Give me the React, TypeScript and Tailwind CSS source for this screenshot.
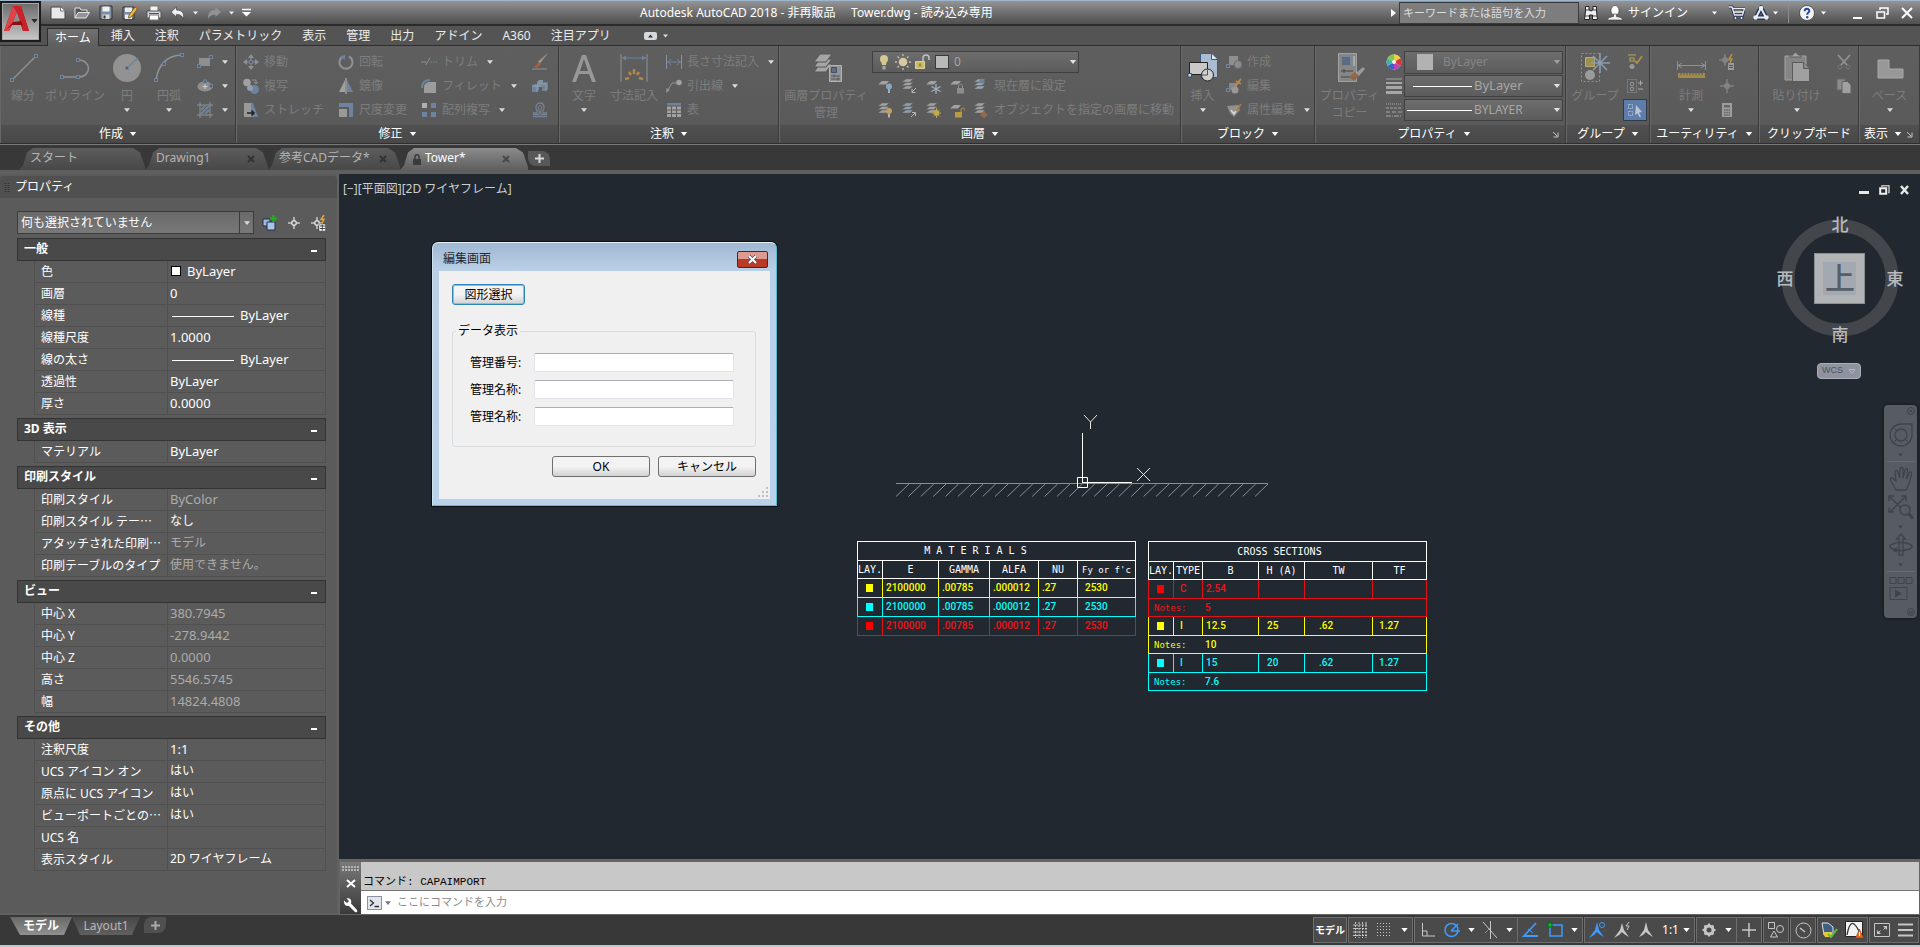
import type { ReactNode } from "react";

const BLUE = "#6d839f";
const GREY = "#8e9296";

/* ---------- small building blocks ---------- */

function Ico({ w = 16, h = 16, children }: { w?: number; h?: number; children: ReactNode }) {
  return (
    <svg width={w} height={h} viewBox={`0 0 ${w} ${h}`} fill="none" className="shrink-0" aria-hidden="true">
      {children}
    </svg>
  );
}

function Caret({ color = "#dcdcdc", w = 6 }: { color?: string; w?: number }) {
  return (
    <svg width={w} height={4} viewBox="0 0 8 5" className="shrink-0" aria-hidden="true">
      <path d="M0 0h8L4 5z" fill={color} />
    </svg>
  );
}

function BigButton({ icon, label, label2, caret, className }: { icon: ReactNode; label: string; label2?: string; caret?: boolean; className: string }) {
  return (
    <button className={`flex shrink-0 flex-col items-center whitespace-nowrap text-[#7d7d7d] ${className}`}>
      {icon}
      <span className="mt-1.5 leading-4">{label}</span>
      {label2 && <span className="leading-[18px]">{label2}</span>}
      {caret && <span className="mt-1 flex"><Caret /></span>}
    </button>
  );
}

function SmallButton({ icon, label, caret }: { icon: ReactNode; label?: string; caret?: boolean }) {
  return (
    <button className="flex h-6 items-center gap-[5px] whitespace-nowrap text-[#7d7d7d]" aria-label={label ? undefined : "ツール"}>
      {icon}
      {label && <span>{label}</span>}
      {caret && <span className="ml-1 flex"><Caret /></span>}
    </button>
  );
}

function Panel({ title, arrow = true, launcher, children }: { title: string; arrow?: boolean; launcher?: boolean; children: ReactNode }) {
  return (
    <section className="flex min-w-0 flex-col border-r border-[#3b3b3b]">
      <div className="flex flex-1 items-start border-l border-[#686868] bg-linear-to-b from-[#5f5f5f] to-[#5a5a5a] pt-1 pb-[3px]">{children}</div>
      <div className="flex h-[18px] items-center border-l border-[#686868] bg-linear-to-b from-[#505050] to-[#484848]">
        <button className="flex flex-1 items-center justify-center gap-1.5 whitespace-nowrap leading-4 text-white">
          {title}
          {arrow && <Caret w={8} color="#fff" />}
        </button>
        {launcher && (
          <button className="mr-1.5" aria-label="ダイアログ">
            <Ico w={7} h={7}><path d="M1 1l4 4M6 1.500v4.500H1.500" stroke="#c8c8c8" /></Ico>
          </button>
        )}
      </div>
    </section>
  );
}

/* little square grip used by most of the drawing icons */
function Grip({ x, y }: { x: number; y: number }) {
  return <rect x={x - 1.5} y={y - 1.5} width="3" height="3" fill="#5c5c5c" stroke={BLUE} />;
}

function Stack({ accent, children }: { accent?: string; children?: ReactNode }) {
  return (
    <Ico>
      {[2, 5.5, 9].map((y) => (
        <path key={y} d={`M5 ${y - 1}h7l-3 3H1z`} fill={accent ?? "#a0a2a4"} stroke="#626262" strokeWidth=".5" />
      ))}
      {children}
    </Ico>
  );
}

function Sheet({ children }: { children?: ReactNode }) {
  return (
    <Ico>
      <path d="M5 3h7l-3 3.500H1z" fill="#a0a2a4" />
      {children}
    </Ico>
  );
}

/* ---------- title bar ---------- */

const tools = [
  {
    name: "新規",
    icon: <Ico><path d="M1 2h9.500l4.500 4v8H1z" fill="#e8e8e8" stroke="#444" /><path d="M10.500 2v4H15" stroke="#777" fill="#fff" /></Ico>,
  },
  {
    name: "開く",
    icon: <Ico><path d="M1 13V3h5l1 2h6v3" fill="#555" stroke="#e4e4e4" /><path d="M1 13l3-5.500h11.500L12 13z" fill="#8f959d" stroke="#e4e4e4" /></Ico>,
  },
  {
    name: "保存",
    icon: <Ico><path d="M2 1h12v13H2z" fill="#7c8da3" stroke="#333" /><path d="M4.500 1.500h7v5h-7z" fill="#f1f1f1" /><path d="M4.500 9.500h7v4.500h-7z" fill="#d8d8d8" /><path d="M5.500 10.500h2v3h-2z" fill="#333" /></Ico>,
  },
  {
    name: "名前を付けて保存",
    icon: <Ico><path d="M1 2h11v12H1z" fill="#7c8da3" stroke="#333" /><path d="M3 2.500h7v4.500H3zM3 9.500h7v4.500H3z" fill="#ececec" /><path d="M7 10l6-8 2.500 2-6 8-3 1z" fill="#eab543" stroke="#5d4310" strokeWidth=".7" /><path d="M13 2l2.500 2 .5-1.500L14.500 1z" fill="#d55" /></Ico>,
  },
  {
    name: "印刷",
    icon: <Ico><path d="M4 1h8v6H4z" fill="#f4f4f4" stroke="#777" /><path d="M1 6h14v7H1z" fill="#d4d6d9" stroke="#555" /><path d="M3.500 10h9v5h-9z" fill="#fff" stroke="#777" /><path d="M3 8.500h10" stroke="#555" /></Ico>,
  },
  {
    name: "元に戻す",
    caret: true,
    icon: <Ico><path d="M1 7l5.500-5v3C12 5 14.500 8 13.500 14 12 10.500 10 9.500 6.500 9.500V12z" fill="#f0f0f0" stroke="#444" strokeWidth=".7" /></Ico>,
  },
  {
    name: "やり直し",
    caret: true,
    icon: <Ico><path d="M15 7L9.500 2v3C4 5 1.500 8 2.500 14 4 10.500 6 9.500 9.500 9.500V12z" fill="#929292" /></Ico>,
  },
];

function TitleBar() {
  return (
    <div className="flex h-[25px] items-center border-b-2 border-[#2b2b2b] bg-linear-to-b from-[#959595] via-[#6f6f6f] to-[#505050] pl-[50px]">
      <div className="flex flex-[44_1_0%] items-center gap-2">
        {tools.map((t) => (
          <button key={t.name} aria-label={t.name} className="flex items-center gap-[7px]">
            {t.icon}
            {t.caret && <Caret w={5} color="#f0f0f0" />}
          </button>
        ))}
        <button aria-label="カスタマイズ">
          <Ico w={9} h={9}><path d="M0 1.500h9" stroke="#fff" strokeWidth="1.500" /><path d="M0 4h9L4.500 8.500z" fill="#fff" /></Ico>
        </button>
      </div>
      <h1 className="flex-[56_1_0%] text-[12px] whitespace-pre text-white">
        {"Autodesk AutoCAD 2018 - 非再販品     Tower.dwg - 読み込み専用"}
      </h1>
      <div className="flex items-center">
        <Ico w={6} h={8}><path d="M0 0v8l5-4z" fill="#fff" /></Ico>
        <input
          aria-label="検索"
          placeholder="キーワードまたは語句を入力"
          className="ml-0.5 h-[22px] w-[180px] border border-[#3a3a3a] bg-[#7d7d7d] px-[3px] text-[11px] text-white placeholder:text-[#dedede]"
        />
        <button aria-label="検索を実行" className="ml-1">
          <Ico>
            <path d="M2.500 1.500h3.500v3.500h1l.5 1h1l.5-1h1V1.500h3.500V6l1 8.500H9.500V10h-3v4.500h-5L2.500 6z" fill="#f0f0f0" stroke="#222" />
            <path d="M2 11h4M10 11h4M2.500 5h3.500M10 5h3.500" stroke="#444" />
          </Ico>
        </button>
        <button className="ml-[7px] flex items-center gap-1 text-[12px] text-white">
          <Ico w={18}><ellipse cx="9" cy="5.500" rx="4" ry="5" fill="#fff" stroke="#333" strokeWidth=".6" /><path d="M7.500 9h3v2.500c3 .5 5.500 1 6.500 3.500H1c1-2.500 3.500-3 6.500-3.500z" fill="#f0f0f0" stroke="#333" strokeWidth=".6" /></Ico>
          <span>サインイン</span>
        </button>
        <span className="ml-6 flex"><Caret w={5} color="#fff" /></span>
        <button aria-label="カート" className="ml-3">
          <Ico><path d="M0 2h3l2.500 8h8l2-6.500H4" stroke="#20304f" strokeWidth="3" /><path d="M0 2h3l2.500 8h8l2-6.500H4M5 7h9" stroke="#e8edf5" strokeWidth="1.300" /><circle cx="6.500" cy="13" r="1.600" fill="#e8edf5" stroke="#20304f" /><circle cx="12.500" cy="13" r="1.600" fill="#e8edf5" stroke="#20304f" /></Ico>
        </button>
        <button aria-label="アプリ" className="ml-2 flex items-center gap-1">
          <Ico><path d="M8 3L13 12.500H3z" stroke="#20304f" strokeWidth="4.500" /><path d="M8 3L13 12.500H3z" stroke="#e8edf5" strokeWidth="2" /><circle cx="8" cy="3" r="2.200" fill="#e8edf5" /><circle cx="2.500" cy="12.500" r="2.200" fill="#e8edf5" /><circle cx="13.500" cy="12.500" r="2.200" fill="#e8edf5" /></Ico>
          <Caret w={5} color="#fff" />
        </button>
        <span className="ml-2.5 h-[21px] w-px bg-[#8c8c8c]" />
        <button aria-label="ヘルプ" className="ml-2.5 flex items-center gap-1.5">
          <Ico>
            <circle cx="8" cy="8" r="7.500" fill="#f4f4f4" stroke="#333" strokeWidth=".7" />
            <path d="M5.700 6.200C5.700 3 10.500 3.200 10.300 6 10.200 7.700 8.200 7.600 8.200 9.800" stroke="#2349a8" strokeWidth="2" />
            <circle cx="8.200" cy="12.200" r="1.200" fill="#2349a8" />
          </Ico>
          <Caret w={5} color="#fff" />
        </button>
        <button aria-label="最小化" className="ml-[27px]"><Ico w={9} h={12}><path d="M0 11h9" stroke="#fff" strokeWidth="2" /></Ico></button>
        <button aria-label="元のサイズ" className="ml-3.5"><Ico w={13} h={12}><path d="M4 3V1h8v6h-2" stroke="#fff" strokeWidth="1.500" /><path d="M1 5h7.500v6H1z" stroke="#fff" strokeWidth="1.500" /></Ico></button>
        <button aria-label="閉じる" className="mr-[7px] ml-3"><Ico w={12} h={12}><path d="M1 1l10 10M11 1L1 11" stroke="#fff" strokeWidth="2" /></Ico></button>
      </div>
    </div>
  );
}

const ribbonTabs = ["挿入", "注釈", "パラメトリック", "表示", "管理", "出力", "アドイン", "A360", "注目アプリ"];

function RibbonTabs() {
  return (
    <nav className="flex h-5 items-end border-b border-[#2e2e2e] bg-[#545454] pl-[47px] text-[12px] text-[#ececec]">
      <button className="-mb-px h-[18px] border border-b-0 border-[#2e2e2e] bg-linear-to-b from-[#727272] to-[#5f5f5f] px-[7px] leading-4 text-white">ホーム</button>
      <span className="w-0.5" />
      {ribbonTabs.map((t) => (
        <button key={t} className="h-[18px] px-2.5 leading-4 whitespace-nowrap">{t}</button>
      ))}
      <button className="ml-[23px] flex h-[18px] items-center gap-1.5" aria-label="リボンを最小化">
        <Ico w={13} h={8}><rect width="13" height="8" rx="2" fill="#d5d8dc" /><path d="M4 5.500h5L6.500 2.500z" fill="#333" /></Ico>
        <Caret w={5} />
      </button>
    </nav>
  );
}

/* ---------- ribbon ---------- */

function Combo({ label, value, options, tall, dim, children }: { label: string; value: string; options?: string[]; tall?: boolean; dim?: boolean; children?: ReactNode }) {
  return (
    <div className={`flex w-full items-center border border-[#404040] bg-linear-to-b from-[#6d6d6d] to-[#5c5c5c] pr-px ${tall ? "h-[23px]" : "h-[22px]"}`}>
      {children}
      <select aria-label={label} defaultValue={value} className={`min-w-0 flex-1 appearance-none bg-transparent ${dim ? "text-[#858585]" : "text-[#a6a6a6]"}`}>
        {(options ?? [value]).map((o) => <option key={o}>{o}</option>)}
      </select>
      <Caret w={8} color={dim ? "#a0a0a0" : "#e0e0e0"} />
    </div>
  );
}

function Ribbon() {
  return (
    <div className="grid grid-cols-[236fr_323fr_220fr_402fr_134fr_251fr_84fr_109fr_100fr_61fr] overflow-hidden border-b border-[#2e2e2e] text-[12px]">
      {/* Draw */}
      <Panel title="作成">
        <span className="w-0.5" />
        <BigButton className="w-10" label="線分" icon={<Ico w={32} h={32}><path d="M5 30L30 5" stroke={GREY} strokeWidth="1.500" /><Grip x={5} y={30} /><Grip x={29} y={6} /></Ico>} />
        <BigButton className="w-16" label="ポリライン" icon={<Ico w={32} h={32}><path d="M3 27h16c14 0 14-17 0-17" stroke={GREY} strokeWidth="1.500" /><Grip x={3} y={27} /><Grip x={19} y={27} /><Grip x={19} y={10} /></Ico>} />
        <BigButton className="w-10" label="円" caret icon={<Ico w={32} h={32}><circle cx="16" cy="18" r="14" fill="#929292" /><path d="M16 18L27 8" stroke={BLUE} strokeWidth="1.500" /><Grip x={16} y={18} /></Ico>} />
        <BigButton className="w-11" label="円弧" caret icon={<Ico w={32} h={32}><path d="M3 30C5 15 14 5 29 5" stroke={GREY} strokeWidth="1.500" /><Grip x={3} y={30} /><Grip x={11} y={14} /><Grip x={29} y={5} /></Ico>} />
        <div className="ml-1.5">
          <SmallButton caret icon={<Ico><path d="M2 4h11v8H2z" fill="#8f8f8f" /><Grip x={2} y={12} /><Grip x={14} y={3} /></Ico>} />
          <SmallButton caret icon={<Ico><ellipse cx="8" cy="8.500" rx="7.500" ry="5" fill="#8f8f8f" /><path d="M8 6v5M5.500 8.500h5" stroke="#d0d0d0" /><Grip x={8} y={3.5} /><Grip x={14} y={8} /></Ico>} />
          <SmallButton caret icon={<Ico><path d="M3 0v16M13 0v16M0 3h16M0 13h16" stroke={GREY} /><path d="M4 8l4-4M4 12l8-8M8 12l4-4" stroke={BLUE} strokeWidth="2" /></Ico>} />
        </div>
      </Panel>

      {/* Modify */}
      <Panel title="修正">
        <div className="grid grid-cols-[95px_83px_111px_auto] pl-1.5">
          <SmallButton label="移動" icon={<Ico><path d="M8 0l3 4H5zM8 16l3-4H5zM0 8l4-3v6zM16 8l-4-3v6z" fill={GREY} /><path d="M8 3v3M8 10v3M3 8h3M10 8h3" stroke={GREY} /><Grip x={8} y={8} /></Ico>} />
          <SmallButton label="回転" icon={<Ico><path d="M5 2.500a6.500 6.500 0 1 0 6 0" stroke={GREY} strokeWidth="2" /><path d="M2 3l5-2v4.500z" fill={BLUE} /></Ico>} />
          <SmallButton label="トリム" caret icon={<Ico><path d="M0 8h5M4.500 11L9 4" stroke={GREY} /><path d="M9 8h2M12 8h1.500M14.500 8H16" stroke={BLUE} /></Ico>} />
          <SmallButton icon={<Ico><path d="M15 0L8 9l-2-1z" fill="#b0a37a" stroke={GREY} strokeWidth=".6" /><path d="M7 8L2 13l3 1 4-4z" fill="#a5603d" /><path d="M0 15h15" stroke={GREY} /></Ico>} />
          <SmallButton label="複写" icon={<Ico><circle cx="4" cy="4.500" r="3.800" fill="#a0a0a0" /><circle cx="11.500" cy="11.500" r="4.500" fill={BLUE} /><circle cx="7" cy="10" r="3" fill="#8f9fb0" /><path d="M9 2h4v4M11 4l2 2 2-2" stroke={GREY} /></Ico>} />
          <SmallButton label="鏡像" icon={<Ico><path d="M7 2v12H1z" fill="#a0a0a0" /><path d="M9 2v12h6z" fill={BLUE} /><path d="M8 0v16" stroke="#c0c0c0" /></Ico>} />
          <SmallButton label="フィレット" caret icon={<Ico><path d="M3 15V9c0-3 3-5 6-5h6v11z" fill="#9c9c9c" /><path d="M1 10C1 5 4 2 9 2" stroke={BLUE} strokeWidth="2" /></Ico>} />
          <SmallButton icon={<Ico><path d="M0 8l2-2h5v6l-2 2H0z" fill={BLUE} /><path d="M5 4l2-2h4v6l-2 1H5z" fill="#8594a3" /><path d="M10 6l2-2h4v7l-2 2h-4z" fill="#6f8397" /><path d="M0 8h5v6M10 6h4v7" stroke="#a5afb9" strokeWidth=".7" /></Ico>} />
          <SmallButton label="ストレッチ" icon={<Ico><path d="M1 1h7v14H1z" fill="#999" /><path d="M8 1h2l5 14H8z" fill={BLUE} /><path d="M4 11h7M8.500 8.500L11 11l-2.500 2.500" stroke="#222" strokeWidth="1.500" /></Ico>} />
          <SmallButton label="尺度変更" icon={<Ico><path d="M1 1h14v14h-4V5H1z" fill={BLUE} /><path d="M1 7h8v8H1z" fill="#999" /></Ico>} />
          <SmallButton label="配列複写" caret icon={<Ico><path d="M1 1h5v5H1z" fill="#b0b0b0" /><path d="M10 1h5v5h-5zM1 10h5v5H1zM10 10h5v5h-5z" fill={BLUE} /></Ico>} />
          <SmallButton icon={<Ico><path d="M1 14.500h14M1 11h4C6 9 4 8 4 5.500c0-6 8-6 8 0C12 8 10 9 11 11h4" stroke={BLUE} strokeWidth="1.300" /><path d="M1 12.500h6C8 9 6.500 8 6.500 5.500c0-2.500 3-2.500 3 0 0 2-1.500 3-.5 7h6" stroke={GREY} strokeWidth=".8" /></Ico>} />
        </div>
      </Panel>

      {/* Annotation */}
      <Panel title="注釈">
        <span className="w-1" />
        <BigButton className="w-10" label="文字" caret icon={<Ico w={32} h={32}><path d="M4 32L14 5h4l10 27h-4l-3-8H11l-3 8zM12 21h8l-4-12z" fill="#979797" fillRule="evenodd" /></Ico>} />
        <BigButton className="w-15" label="寸法記入" icon={<Ico w={32} h={32}><path d="M3 4v28M29 4v28" stroke={GREY} /><path d="M4 8h24" stroke={BLUE} /><path d="M4 8l4-2.500v5zM28 8l-4-2.500v5z" fill={BLUE} /><path d="M16 19v5M11 22l2 3M21 22l-2 3M7 29l4-1M25 29l-4-1" stroke="#b3864a" strokeWidth="2.500" /></Ico>} />
        <div className="ml-0.5">
          <SmallButton label="長さ寸法記入" caret icon={<Ico><path d="M.5 1v14M15.500 1v14" stroke={GREY} /><path d="M1 8h14M5 5L2 8l3 3M11 5l3 3-3 3" stroke={BLUE} /></Ico>} />
          <SmallButton label="引出線" caret icon={<Ico><circle cx="13" cy="4.500" r="2.800" fill="#a0a0a0" /><path d="M10 5H6L2 12" stroke={GREY} /><path d="M0 15l.5-5L4 12z" fill={GREY} /></Ico>} />
          <SmallButton label="表" icon={<Ico><path d="M1 1h14v2.500H1z" fill={BLUE} /><path d="M1 4.500h14V15H1z" fill="#a2a2a2" /><path d="M1 8h14M1 11.500h14M5.500 4v11M10.500 4v11" stroke="#5c5c5c" /></Ico>} />
        </div>
      </Panel>

      {/* Layers */}
      <Panel title="画層">
        <span className="w-0.5" />
        <BigButton
          className="w-[88px]"
          label="画層プロパティ"
          label2="管理"
          icon={
            <Ico w={32} h={32}>
              {[14, 9, 4].map((y) => <path key={y} d={`M10 ${y}h12l-6 8H4z`} fill="#a5a5a5" stroke="#565656" />)}
              <path d="M19.500 15.500h12v16h-12z" fill="#909497" stroke="#b2b2b2" /><path d="M21.500 17.500h5v5h-5z" fill="#686c76" stroke="#434e72" /><path d="M21 26h9M21 29h9M24 24.500v3M28 27.500v3" stroke="#555" />
            </Ico>
          }
        />
        <div className="ml-0.5">
          <div className="flex h-6 w-[207px] items-center">
            <Combo label="現在の画層" value="0">
              <div className="flex items-center gap-[3px] pr-[5px] pl-[3px]">
                <Ico><path d="M4 5a4 4 0 1 1 8 0c0 3-2 3-2 6H6c0-3-2-3-2-6z" fill="#d5c88f" /><path d="M6.500 12h3v3.500h-3z" fill="#a8a8a8" /></Ico>
                <Ico><circle cx="8" cy="8" r="4.300" fill="#d5c9a4" /><path d="M8 0v2M8 14v2M0 8h2M14 8h2M2.500 2.500L4 4M12 12l1.500 1.500M13.500 2.500L12 4M4 12l-1.500 1.500" stroke="#c8c0a4" strokeWidth="1.300" /></Ico>
                <Ico><path d="M1.500 7.500h9v7h-9z" fill="#c9b866" stroke="#ddd29e" /><path d="M9 7V4c0-4 6-4 6 0v2" stroke="#c2c2c2" strokeWidth="1.500" /><path d="M6 9.500v3" stroke="#55502c" /></Ico>
                <span className="ml-0.5 size-3.5 border border-[#3a3a3a] bg-[#b9b9b9]" />
              </div>
            </Combo>
          </div>
          <div className="flex items-center gap-2 pl-[5px]">
            <SmallButton icon={<Sheet><circle cx="12" cy="8.500" r="3" fill="#8aa6bb" /><path d="M12 11v4" stroke="#9fb0bd" strokeWidth="2" /></Sheet>} />
            <SmallButton icon={<Stack><path d="M15 10l-4 4M11 11v3.500h3.500" stroke="#b8b8b8" /></Stack>} />
            <SmallButton icon={<Sheet><path d="M11 6v10M6.500 8.500l9 5M15.500 8.500l-9 5" stroke="#9eb1c4" strokeWidth="1.300" /></Sheet>} />
            <SmallButton icon={<Sheet><path d="M8 10h7v5.500H8z" fill="#8d8d8d" /><path d="M9.500 10V8c0-2.500 4-2.500 4 0v2" stroke={GREY} /></Sheet>} />
            <SmallButton label="現在層に設定" icon={<Stack accent="#9aa5b1"><circle cx="9" cy="3" r="2.500" fill="#6f8299" /></Stack>} />
          </div>
          <div className="flex items-center gap-2 pl-[5px]">
            <SmallButton icon={<Stack><circle cx="12" cy="9" r="3" fill="#c1a060" /><path d="M12 12v3.500" stroke="#b4b4b4" strokeWidth="2" /></Stack>} />
            <SmallButton icon={<Stack accent="#8f9eae"><path d="M10 15l4-4M11 10.500h3.500V14" stroke="#b8b8b8" /></Stack>} />
            <SmallButton icon={<Stack><circle cx="11.500" cy="11" r="3" fill="#beaa50" /><path d="M11.500 6v2M11.500 14v2M6.500 11h2M15 11h1M8 7.500l1 1M15 7.500l-1 1M8 14.500l1-1M15 14.500l-1-1" stroke="#beaa50" /></Stack>} />
            <SmallButton icon={<Sheet><path d="M6 10h7v5.500H6z" fill="#b79a42" /><path d="M12 10V8c0-2.500 4-2.500 4 0v1" stroke="#b79a42" /></Sheet>} />
            <SmallButton label="オブジェクトを指定の画層に移動" icon={<Stack><path d="M7 13l4-4 4 4-4 3z" fill="#97694b" /></Stack>} />
          </div>
        </div>
      </Panel>

      {/* Block */}
      <Panel title="ブロック">
        <BigButton
          className="w-[41px]"
          label="挿入"
          caret
          icon={
            <Ico w={32} h={32}>
              <path d="M13.500 3.500h11l6 6v18h-17z" fill="#a9bcd2" stroke="#3f5879" /><path d="M24.500 3.500v6h6" fill="#e2e9f2" stroke="#3f5879" />
              <path d="M2.500 12.500h18v12h-18z" fill="#c9c9c9" stroke="#222" /><circle cx="20.500" cy="25" r="6" fill="#cfcfcf" stroke="#222" /><path d="M20.500 20v5h-6" stroke="#555" />
              <path d="M1 23.500h3.500V27H1z" fill="#ccd9ea" stroke="#2e4c77" />
            </Ico>
          }
        />
        <div className="ml-[3px]">
          <SmallButton label="作成" icon={<Ico><path d="M3 2h9v9H3z" fill="#8f8f8f" /><circle cx="12" cy="10.500" r="4" fill="#8b8b8b" stroke="#6b6b6b" /><Grip x={2} y={12} /></Ico>} />
          <SmallButton label="編集" icon={<Ico><path d="M3 5h8v7H3z" fill="#888" /><circle cx="9" cy="12" r="3.500" fill="#989898" /><path d="M15 1l-5 7-1-1zM10 3l5 3" stroke="#b3874d" strokeWidth="1.500" /><Grip x={2} y={12} /></Ico>} />
          <SmallButton label="属性編集" caret icon={<Ico><path d="M1 4l11-1 2 5-6 7-4-4z" fill="#8f8f8f" /><path d="M5 8l3 4 5-8" stroke="#ddd" strokeWidth="1.500" /><path d="M10 9l5-7" stroke="#a17744" strokeWidth="2" /></Ico>} />
        </div>
      </Panel>

      {/* Properties */}
      <Panel title="プロパティ" launcher>
        <BigButton
          className="w-[67px]"
          label="プロパティ"
          label2="コピー"
          icon={
            <Ico w={32} h={32}>
              <path d="M4.500 3.500h18v28h-18z" fill="#868686" stroke="#a2a2a2" /><path d="M7.500 6.500h9v9h-9z" fill="#596c82" stroke="#73879d" /><path d="M20 6v10" stroke="#aaa" strokeWidth="2" /><path d="M7 21h12M7 27h9M10 19v4" stroke="#444" />
              <path d="M15 27l6-5 4 4-5 5z" fill="#8e6849" /><path d="M22 23l7-6 2 2-6 7z" fill="#9a9a9a" />
            </Ico>
          }
        />
        <div className="mr-0.5 ml-[3px]">
          <SmallButton icon={<Ico><circle cx="8" cy="8" r="7.500" fill="#eee" /><path d="M8 8V.5A7.500 7.500 0 0 1 14.500 4.300z" fill="#e8d13f" /><path d="M8 8l6.500-3.700a7.500 7.500 0 0 1 0 7.400z" fill="#d8343a" /><path d="M8 8l6.500 3.700A7.500 7.500 0 0 1 8 15.500z" fill="#b146b7" /><path d="M8 8v7.500a7.500 7.500 0 0 1-6.500-3.800z" fill="#3c5fd0" /><path d="M8 8l-6.500 3.700a7.500 7.500 0 0 1 0-7.400z" fill="#42b5a7" /><path d="M8 8L1.500 4.300A7.500 7.500 0 0 1 8 .5z" fill="#7dc949" /><circle cx="8" cy="8" r="2" fill="#f3f3f3" /></Ico>} />
          <SmallButton icon={<Ico><path d="M0 1h16" stroke="#a6a6a6" /><path d="M0 5h16" stroke="#a6a6a6" strokeWidth="2" /><path d="M0 9.500h16" stroke="#a6a6a6" strokeWidth="3" /><path d="M0 14.500h16" stroke="#a6a6a6" strokeWidth="3" /></Ico>} />
          <SmallButton icon={<Ico><path d="M0 2h16" stroke="#a6a6a6" strokeDasharray="1 1" /><path d="M0 6h16" stroke="#a6a6a6" strokeDasharray="3 1" /><path d="M0 10h16" stroke="#a6a6a6" strokeDasharray="4 2" /><path d="M0 14h16" stroke="#a6a6a6" strokeDasharray="5 1 1 1" /></Ico>} />
        </div>
        <div className="mr-0.5 flex flex-1 flex-col">
          <div className="flex h-6 items-center">
            <Combo label="色" value="ByLayer" tall dim><span className="mr-2.5 ml-3 size-4 shrink-0 bg-[#b2b2b2]" /></Combo>
          </div>
          <div className="flex h-6 items-center text-[13px]">
            <Combo label="線の太さ" value="ByLayer"><span className="mr-0.5 ml-2 h-px w-[59px] shrink-0 bg-white" /></Combo>
          </div>
          <div className="flex h-6 items-center">
            <Combo label="線種" value="BYLAYER"><span className="mr-0.5 ml-0.5 h-px w-[65px] shrink-0 bg-white" /></Combo>
          </div>
        </div>
      </Panel>

      {/* Groups */}
      <Panel title="グループ">
        <BigButton
          className="w-14"
          label="グループ"
          icon={
            <Ico w={32} h={32}>
              <path d="M2.500 3.500h18v28h-18z" stroke={GREY} strokeDasharray="2 2" /><path d="M6.500 7.500h9v9h-9z" fill="#a0904e" stroke="#b7ab78" /><circle cx="11" cy="25" r="5" fill="#9b9b9b" />
              <path d="M21 3v20M12 13h19M14 6l14 14M28 6L14 20" stroke="#8b9daf" strokeWidth="1.500" />
            </Ico>
          }
        />
        <div className="flex flex-col">
          <button aria-label="グループ解除" className="flex h-6 w-6 items-center justify-center"><Ico><path d="M1 1h8M3 4h4v3H3z" stroke="#a0904e" strokeWidth="1.500" /><circle cx="5" cy="12.500" r="2.500" fill="#999" /><path d="M15 2l-5 7-2-2" stroke="#ab8d49" strokeWidth="2" /></Ico></button>
          <button aria-label="グループ編集" className="flex h-6 w-6 items-center justify-center"><Ico><path d="M.5 1.500h9v13h-9z" stroke={GREY} strokeDasharray="1 1" /><path d="M3.500 4.500h3v3h-3zM3.500 9.500h3v3h-3z" stroke={GREY} /><path d="M11 5h5M13.500 2.500v5M11 11h5" stroke="#aaa" /></Ico></button>
          <button aria-label="グループ選択" className="mt-px flex h-[22px] w-6 items-center justify-center border border-[#303a4b] bg-[#5f7daa]"><Ico><path d="M1.500 2.500h4v4h-4zM1.500 9.500h4v4h-4z" stroke="#a9b8ce" strokeDasharray="2 1" /><path d="M9 3l6 7-3 .5 2 4-1.500.8-2-4L8 13z" fill="#b9c4d5" /></Ico></button>
        </div>
      </Panel>

      {/* Utilities */}
      <Panel title="ユーティリティ">
        <span className="w-3" />
        <BigButton className="w-14" label="計測" caret icon={<Ico w={32} h={32}><path d="M2.500 11v9M30.500 11v9M3 15.500h27M7 13l-4 2.500L7 18M26 13l4 2.500-4 2.500" stroke={GREY} /><path d="M3 23h27v5H3z" fill="#a18b45" /><path d="M6 23v2M9 23v2M12 23v2M15 23v2M18 23v2M21 23v2M24 23v2M27 23v2" stroke="#5c5c5c" /></Ico>} />
        <div>
          <SmallButton icon={<Ico><path d="M6 0v12M0 6h12M4 4h4v4H4z" stroke={GREY} /><path d="M13 0l-3 5h3l-2 4" stroke="#b78e45" strokeWidth="1.500" /><path d="M9 9h6v7H9z" fill="#9a9a9a" /><path d="M10 11.500h4M10 13.500h4" stroke="#555" /></Ico>} />
          <SmallButton icon={<Ico><path d="M8 1v14M1 8h14M6 6h4v4H6z" stroke={GREY} /></Ico>} />
          <SmallButton icon={<Ico><path d="M3 1h10v14H3z" fill="#9d9d9d" /><path d="M5 3h6v2.500H5z" fill="#666" /><path d="M5 8h6M5 10.500h6M5 13h6" stroke="#5f5f5f" strokeDasharray="1.500 .8" strokeWidth="1.500" /></Ico>} />
        </div>
      </Panel>

      {/* Clipboard */}
      <Panel title="クリップボード" arrow={false}>
        <BigButton className="w-[73px]" label="貼り付け" caret icon={<Ico w={32} h={32}><path d="M4 6h21v24H4z" fill="#858585" stroke="#a5a5a5" /><path d="M9 7V5h3c0-3 5-3 5 0h3v2z" fill="#a5a5a5" stroke="#5b5b5b" /><path d="M11.500 12.500h11l6 6v13h-17z" fill="#a0a0a0" stroke="#5a5a5a" /><path d="M22.500 12.500v6h6" fill="#8a8a8a" stroke="#5a5a5a" /></Ico>} />
        <div className="ml-[3px]">
          <SmallButton icon={<Ico><path d="M2 1l9 10M14 1L5 11" stroke={GREY} strokeWidth="1.800" /><circle cx="4" cy="13" r="2" stroke="#777" /><circle cx="12" cy="13" r="2" stroke="#777" /></Ico>} />
          <SmallButton icon={<Ico><path d="M1 1h8v11H1z" fill="#8b8b8b" stroke="#696969" /><path d="M6 3.500h5.500L15 7v8.500H6z" fill="#a0a0a0" stroke="#636363" /></Ico>} />
        </div>
      </Panel>

      {/* View */}
      <Panel title="表示" launcher>
        <BigButton className="w-[59px]" label="ベース" caret icon={<Ico w={32} h={32}><path d="M4 10h11v9h14v9H4z" fill="#989898" stroke="#a8a8a8" /></Ico>} />
      </Panel>
    </div>
  );
}

/* ---------- file tabs ---------- */

const fileTabs = [
  { name: "スタート", width: "w-[126px]", close: false, active: false },
  { name: "Drawing1", width: "w-[123px]", close: true, active: false },
  { name: "参考CADデータ*", width: "w-[132px]", close: true, active: false },
  { name: "Tower*", width: "w-[128px]", close: true, active: true },
];

function FileTabs() {
  return (
    <div className="flex h-[29px] items-end border-b-4 border-[#5f5f5f] bg-[#383838] pl-[19px] text-[12px]">
      {fileTabs.map((t) => (
        <div
          key={t.name}
          className={`flex h-[22px] items-center [clip-path:polygon(0_100%,4px_80%,8px_20%,14px_0,calc(100%_-_12px)_0,calc(100%_-_5px)_20%,100%_85%,100%_100%)] ${t.width} ${
            t.active ? "bg-linear-to-b from-[#8b8b8b] to-[#5f5f5f] pr-[18px] pl-[13px] text-white" : "bg-linear-to-b from-[#5c5c5c] to-[#484848] pr-[13px] pl-[11px] text-[#b4b4b4]"
          }`}
        >
          {t.active && <span className="mr-1 flex"><Ico w={8} h={11}><path d="M2 5V3c0-3 4-3 4 0v2" stroke="#3b3b3b" strokeWidth="1.500" /><path d="M0 5h8v6H0z" fill="#3b3b3b" /></Ico></span>}
          <button className="flex-1 pb-0.5 text-left leading-4 whitespace-nowrap">{t.name}</button>
          {t.close && <button aria-label={`${t.name} を閉じる`}><Ico w={8} h={8}><path d="M1 1l6 6M7 1L1 7" stroke={t.active ? "#484848" : "#333"} strokeWidth="2" /></Ico></button>}
        </div>
      ))}
      <button aria-label="新しい図面" className="mb-1 flex h-[15px] w-[22px] items-center justify-center rounded-tr-[8px] rounded-bl-[8px] bg-[#585858]">
        <Ico w={9} h={9}><path d="M4.500 0v9M0 4.500h9" stroke="#d8d8d8" strokeWidth="2" /></Ico>
      </button>
    </div>
  );
}

/* ---------- properties palette ---------- */

type Row = { label: string; value: string; dim?: boolean; swatch?: boolean; line?: boolean };

const sections: { title: string; rows: Row[] }[] = [
  {
    title: "一般",
    rows: [
      { label: "色", value: "ByLayer", swatch: true },
      { label: "画層", value: "0" },
      { label: "線種", value: "ByLayer", line: true },
      { label: "線種尺度", value: "1.0000" },
      { label: "線の太さ", value: "ByLayer", line: true },
      { label: "透過性", value: "ByLayer" },
      { label: "厚さ", value: "0.0000" },
    ],
  },
  { title: "3D 表示", rows: [{ label: "マテリアル", value: "ByLayer" }] },
  {
    title: "印刷スタイル",
    rows: [
      { label: "印刷スタイル", value: "ByColor", dim: true },
      { label: "印刷スタイル テー⋯", value: "なし" },
      { label: "アタッチされた印刷⋯", value: "モデル", dim: true },
      { label: "印刷テーブルのタイプ", value: "使用できません。", dim: true },
    ],
  },
  {
    title: "ビュー",
    rows: [
      { label: "中心 X", value: "380.7945", dim: true },
      { label: "中心 Y", value: "-278.9442", dim: true },
      { label: "中心 Z", value: "0.0000", dim: true },
      { label: "高さ", value: "5546.5745", dim: true },
      { label: "幅", value: "14824.4808", dim: true },
    ],
  },
  {
    title: "その他",
    rows: [
      { label: "注釈尺度", value: "1:1" },
      { label: "UCS アイコン オン", value: "はい" },
      { label: "原点に UCS アイコン", value: "はい" },
      { label: "ビューポートごとの⋯", value: "はい" },
      { label: "UCS 名", value: "" },
      { label: "表示スタイル", value: "2D ワイヤフレーム" },
    ],
  },
];

function PropertiesPalette() {
  return (
    <aside className="border-r-2 border-b-2 border-[#616161] bg-[#5b5b5b] text-[12px] text-white">
      <div className="mt-0.5 flex h-[22px] items-center rounded-t bg-[#505050] pl-1">
        <Ico w={7} h={11}><path d="M1.500 1v10M4.500 1v10" stroke="#333" strokeDasharray="1 1" strokeWidth="1.500" /></Ico>
        <h2 className="pl-1 leading-4">プロパティ</h2>
      </div>
      <div className="pt-[13px] pr-[11px] pl-[17px]">
        <div className="mb-1 flex items-center gap-2">
          <div className="flex h-[23px] flex-1 items-center border border-[#3c3c3c] bg-linear-to-b from-[#6a6a6a] to-[#787878]">
            <select aria-label="選択オブジェクト" className="h-full min-w-0 flex-1 appearance-none border-r border-[#3c3c3c] pl-[3px] text-[12px]">
              <option>何も選択されていません</option>
            </select>
            <span className="flex w-[13px] justify-center"><Caret /></span>
          </div>
          <button aria-label="PICKADD"><Ico><path d="M1 4h7v7H1z" fill="#9ebbdc" stroke="#1e2f49" /><path d="M5 7h8v8H5z" fill="#a8c5e6" stroke="#1e2f49" /><path d="M11.500 0v7M8 3.500h7" stroke="#22a822" strokeWidth="2.500" /></Ico></button>
          <button aria-label="オブジェクト選択"><Ico><path d="M8 2v12M2 8h12" stroke="#fff" /><path d="M6 6h4v4H6z" fill="#5b5b5b" stroke="#fff" /></Ico></button>
          <button aria-label="クイック選択"><Ico><path d="M7 2v12M1 8h12" stroke="#fff" /><path d="M5 6h4v4H5z" fill="#5b5b5b" stroke="#fff" /><path d="M14 0l-3 4.500h3L12 8" stroke="#eba33b" strokeWidth="1.500" /><path d="M9 9h6.500v7H9z" fill="#fff" stroke="#333" strokeWidth=".5" /><path d="M10 11h5M10 13.500h5M12.300 9.500v6" stroke="#444" /></Ico></button>
        </div>
        {sections.map((s) => (
          <section key={s.title} className="mb-[3px]">
            <button className="flex h-[23px] w-full items-center justify-between border border-[#333] bg-[#494949] pr-2 pb-0.5 pl-1.5 font-bold">
              {s.title}
              <span className="mt-1 h-0.5 w-1.5 bg-white" />
            </button>
            <div className="pl-[17px]">
              <table className="w-full table-fixed border-separate border-spacing-0">
                <tbody>
                  {s.rows.map((r) => (
                    <tr key={r.label}>
                      <th scope="row" className="h-[22px] w-[133px] overflow-hidden border-b border-l border-[#505050] p-0 pl-1.5 text-left leading-5 font-normal whitespace-nowrap">{r.label}</th>
                      <td className={`h-[22px] border-x border-b border-[#505050] p-0 pb-0.5 pl-0.5 leading-[18px] whitespace-nowrap ${r.dim ? "text-[#acacac]" : ""} ${/^[\x00-\x7f]+$/.test(r.value) ? "text-[13px]" : ""}`}>
                        {r.swatch && <span className="mr-1.5 ml-px inline-block size-2.5 border border-black bg-white" />}
                        {r.line && <span className="mr-1.5 ml-0.5 inline-block h-px w-[62px] bg-white align-middle" />}
                        {r.value}
                      </td>
                    </tr>
                  ))}
                </tbody>
              </table>
            </div>
          </section>
        ))}
      </div>
    </aside>
  );
}

/* ---------- drawing area ---------- */

function UcsAndGround() {
  return (
    <svg width="374" height="90" viewBox="0 0 374 90" fill="none" className="absolute top-[236px] left-[557px]" aria-hidden="true">
      <path d="M0 73.500h372" stroke="#8b9096" />
      {Array.from({ length: 30 }, (_, i) => (
        <path key={i} d={`M${13 + i * 12.38} 74l-13 12.500`} stroke="#8b9096" />
      ))}
      <path d="M186.500 23v50M186 72.500h50" stroke="#fff" />
      <path d="M181.500 67.500h10v10h-10z" stroke="#fff" />
      <path d="M188 5l6.500 7L201 5M194.500 12v7M241 58l13 13M254 58l-13 13" stroke="#e6e6e6" />
    </svg>
  );
}

const materials = [
  { border: "border-[#ff0]", text: "text-[#ff0]", fill: "bg-[#ff0]" },
  { border: "border-[#0ff]", text: "text-[#0ff]", fill: "bg-[#0ff]" },
  { border: "border-[#e01216]", text: "text-[#f01418]", fill: "bg-[#f00]" },
];

function MaterialsTable() {
  return (
    <table className="absolute top-[367px] left-[518px] w-[279px] table-fixed border-separate border-spacing-0 font-['DejaVu_Sans_Mono',monospace] text-[10px] leading-3 whitespace-nowrap text-white">
      <colgroup><col className="w-[25px]" /><col className="w-14" /><col className="w-[51px]" /><col className="w-[49px]" /><col className="w-[39px]" /><col className="w-[59px]" /></colgroup>
      <thead>
        <tr><th colSpan={6} className="h-5 border border-white p-0 pr-[42px] font-normal">M A T E R I A L S</th></tr>
        <tr className="*:h-[18px] *:border-b *:border-l *:border-white *:p-0 *:font-normal">
          <th>LAY.</th><th>E</th><th>GAMMA</th><th>ALFA</th><th>NU</th><th className="border-r text-[9px]">Fy or f'c</th>
        </tr>
      </thead>
      <tbody>
        {materials.map((m) => (
          <tr key={m.text} className={`font-['Roboto',sans-serif] font-medium *:h-[19px] *:border-b *:border-l *:p-0 *:pl-[3px] ${m.text}`}>
            <td className={m.border}><span className={`ml-[5px] block h-2 w-[7px] ${m.fill}`} /></td>
            <td className={m.border}>2100000</td>
            <td className={m.border}>.00785</td>
            <td className={m.border}>.000012</td>
            <td className={m.border}>.27</td>
            <td className={`border-r ${m.border}`}><span className="ml-1">2530</span></td>
          </tr>
        ))}
      </tbody>
    </table>
  );
}

const crossSections = [
  { ...materials[2], cells: ["C", "2.54", "", "", ""], note: "5" },
  { ...materials[0], cells: ["I", "12.5", "25", ".62", "1.27"], note: "10" },
  { ...materials[1], cells: ["I", "15", "20", ".62", "1.27"], note: "7.6" },
];

const crossPad = ["pl-1.5", "pl-[3px]", "pl-2", "pl-3.5", "pl-1.5"];

function CrossSectionsTable() {
  return (
    <table className="absolute top-[367px] left-[809px] w-[279px] table-fixed border-separate border-spacing-0 font-['DejaVu_Sans_Mono',monospace] text-[10px] leading-3 whitespace-nowrap text-white">
      <colgroup><col className="w-[25px]" /><col className="w-[29px]" /><col className="w-14" /><col className="w-[46px]" /><col className="w-[68px]" /><col className="w-[55px]" /></colgroup>
      <thead>
        <tr><th colSpan={6} className="h-[21px] border border-white p-0 pr-4 font-normal">CROSS SECTIONS</th></tr>
        <tr className="*:h-[18px] *:border-b *:border-l *:border-white *:p-0 *:font-normal">
          <th>LAY.</th><th>TYPE</th><th>B</th><th>H (A)</th><th>TW</th><th className="border-r">TF</th>
        </tr>
      </thead>
      {crossSections.map((c) => (
        <tbody key={c.text} className={`font-['Roboto',sans-serif] font-medium ${c.text}`}>
          <tr className="*:h-[19px] *:border-b *:border-l *:p-0">
            <td className={c.border}><span className={`ml-2 block h-2 w-[7px] ${c.fill}`} /></td>
            {c.cells.map((v, i) => (
              <td key={i} className={`${c.border} ${i === 4 ? "border-r" : ""}`}><span className={crossPad[i]}>{v}</span></td>
            ))}
          </tr>
          <tr>
            <td colSpan={6} className={`h-[18px] border border-t-0 p-0 pl-[5px] ${c.border}`}>
              <span className="inline-block w-[51px] font-['DejaVu_Sans_Mono',monospace] text-[9px]">Notes:</span>
              {c.note}
            </td>
          </tr>
        </tbody>
      ))}
    </table>
  );
}

function ViewCube() {
  return (
    <svg width="134" height="146" viewBox="-2 -8 134 146" className="absolute top-[33px] right-[13px]" aria-hidden="true">
      <circle cx="65" cy="63" r="52" fill="none" stroke="#43474c" strokeWidth="13" />
      <rect x="39.500" y="38.500" width="50" height="50" fill="#b1b3b5" stroke="#8c8f92" />
      <rect x="48" y="47" width="33" height="33" fill="#a3a9b0" />
      <g fill="#b8bbbe" textAnchor="middle" className="font-['Noto_Sans_CJK_JP',sans-serif] text-[17px] font-medium">
        <text x="65" y="16">北</text>
        <text x="65" y="126">南</text>
        <text x="10" y="70">西</text>
        <text x="120" y="70">東</text>
        <text x="65" y="74" fill="#555d66" className="text-[30px]">上</text>
      </g>
    </svg>
  );
}

function NavBar() {
  const line = "#3f444b";
  return (
    <div className="absolute top-[231px] right-[3px] flex h-[213px] w-[33px] flex-col items-center rounded bg-[#575c63] text-[#3f444b] shadow-[0_0_3px_#111]">
      <button aria-label="閉じる" className="mt-0.5 mr-0.5 self-end"><Ico w={8} h={8}><circle cx="4" cy="4" r="3.500" stroke={line} /><path d="M2.500 2.500l3 3M5.500 2.500l-3 3" stroke={line} /></Ico></button>
      <button aria-label="ステアリングホイール" className="mt-2"><Ico w={24} h={24}><path d="M12 1h11v11a11 11 0 1 1-11-11z" stroke={line} strokeWidth="1.300" /><circle cx="12" cy="12" r="6" stroke={line} strokeWidth="1.300" /><path d="M4 20l4-4M16 16l4 4M8 8L4 4" stroke={line} /></Ico></button>
      <span className="mt-1.5 mb-1"><Caret w={5} color={line} /></span>
      <span className="h-px w-7 bg-[#666b72]" />
      <button aria-label="画面移動" className="mt-1"><Ico w={24} h={25}><path d="M7 24L2 15c-2-3 1-4 2.500-2L7 15 6 6c0-2 2.500-2 3 0l1.500 6L11 3c0-2 3-2 3 0v9l2-8c.5-2 3-1.500 2.500.5L17.500 13l2.500-6c1-2 3-1 2.500 1L20 18l-3 6z" stroke={line} strokeWidth="1.300" /></Ico></button>
      <button aria-label="ズーム" className="mt-1"><Ico w={26} h={24}><path d="M2 2l15 15M17 2L2 17M1 6V1h5M13 1h5v5M1 13v4h5" stroke={line} strokeWidth="1.500" /><circle cx="17" cy="15" r="5" fill="#575c63" stroke={line} strokeWidth="1.500" /><path d="M20.500 18.500l4.500 5" stroke={line} strokeWidth="3" /></Ico></button>
      <span className="mt-1.5 mb-1"><Caret w={5} color={line} /></span>
      <button aria-label="オービット"><Ico w={24} h={24}><path d="M10 22V6H7.500L12 1l4.500 5H14v16z" stroke={line} strokeWidth="1.300" /><ellipse cx="12" cy="13.500" rx="11" ry="4" stroke={line} strokeWidth="1.500" /><path d="M3 17l5-3v6z" fill={line} /></Ico></button>
      <span className="mt-1.5 mb-1"><Caret w={5} color={line} /></span>
      <span className="h-px w-7 bg-[#666b72]" />
      <button aria-label="ShowMotion" className="mt-1"><Ico w={24} h={25}><path d="M1 1.500h6v6H1zM9 1.500h6v6H9zM17 1.500h6v6h-6zM1 11.500h17v12H1z" stroke={line} /><path d="M6 13.500v8l7-4z" fill={line} /></Ico></button>
      <button aria-label="メニュー" className="mt-auto mr-0.5 mb-0.5 self-end"><Ico w={8} h={8}><circle cx="4" cy="4" r="3.500" stroke={line} /><path d="M2 3.500h4M2 5h4" stroke={line} /></Ico></button>
    </div>
  );
}

const fields = [
  { id: "number", label: "管理番号:" },
  { id: "name1", label: "管理名称:" },
  { id: "name2", label: "管理名称:" },
];

function EditDialog() {
  const button = "h-[21px] rounded-[3px] border bg-linear-to-b from-[#f3f3f3] from-50% to-[#d2d2d2] leading-4";
  return (
    <div role="dialog" aria-label="編集画面" className="absolute top-[68px] left-[93px] w-[345px] rounded-t-md border border-t-[#e9f1f8] border-r-[#4fc3dc] border-b-[#4fc3dc] border-l-[#cfe0ee] bg-linear-to-b from-[#9fb8d3] via-[#b9cfe6] via-10% to-[#b9d1ea] px-1.5 pb-1.5 text-[12px] text-black shadow-[0_0_0_1px_#0b0f14]">
      <div className="flex h-7 items-center justify-between pt-1 pl-1">
        <h2 className="text-[#1c2733]">編集画面</h2>
        <button aria-label="閉じる" className="mr-0.5 flex h-[17px] w-[31px] items-center justify-center rounded-[2px] border border-[#5a1f22] bg-linear-to-b from-[#dd9a91] from-50% to-[#bb3a26] to-50%">
          <Ico w={11} h={9}><path d="M2 1l7 7M9 1L2 8" stroke="#4a4f63" strokeWidth="3.500" /><path d="M2 1l7 7M9 1L2 8" stroke="#fff" strokeWidth="2" /></Ico>
        </button>
      </div>
      <div className="relative bg-[#f0f0f0] pt-[13px] pr-3.5 pb-[22px] pl-[13px]">
        <button className={`${button} w-[73px] border-[#2f86b8] shadow-[inset_0_0_0_1px_#5ed1f0]`}>図形選択</button>
        <fieldset className="mt-[18px] rounded-[3px] border border-[#d9dcdf] pt-3.5 pb-5 pl-[17px]">
          <legend className="-ml-3.5 px-0.5 leading-4">データ表示</legend>
          <div className="flex flex-col gap-2">
            {fields.map((f) => (
              <div key={f.id} className="flex items-center">
                <label htmlFor={f.id} className="w-16 leading-4">{f.label}</label>
                <input id={f.id} className="h-[19px] w-[200px] rounded-[2px] border border-[#e2e3ea] border-t-[#abadb3] bg-white px-1" />
              </div>
            ))}
          </div>
        </fieldset>
        <div className="mt-[9px] flex justify-end gap-2">
          <button className={`${button} w-[98px] border-[#707070]`}>OK</button>
          <button className={`${button} w-[98px] border-[#707070]`}>キャンセル</button>
        </div>
        <span className="absolute right-0.5 bottom-0.5">
          <Ico w={10} h={10}><path d="M8 0h2v2H8zM8 4h2v2H8zM4 4h2v2H4zM8 8h2v2H8zM4 8h2v2H4zM0 8h2v2H0z" fill="#bfbfbf" /></Ico>
        </span>
      </div>
    </div>
  );
}

function Canvas() {
  return (
    <div className="relative min-h-[680px] flex-1 overflow-hidden bg-[#222830]">
      <p className="pt-[7px] pl-1 text-[12px] leading-4 text-[#cdd0d3]">[−][平面図][2D ワイヤフレーム]</p>
      <UcsAndGround />
      <MaterialsTable />
      <CrossSectionsTable />
      <EditDialog />
      <div className="absolute top-[11px] right-[11px] flex items-end gap-2.5">
        <button aria-label="最小化"><Ico w={10} h={10}><path d="M0 7.500h10" stroke="#e6e6e6" strokeWidth="3" /></Ico></button>
        <button aria-label="元のサイズ"><Ico w={11} h={10}><path d="M3 2V.8h7v6.700H9" stroke="#b8b8b8" strokeWidth="1.500" /><path d="M1.200 3.200h6v5.600h-6z" stroke="#f0f0f0" strokeWidth="2" /></Ico></button>
        <button aria-label="閉じる"><Ico w={9} h={10}><path d="M1 1l7 8M8 1L1 9" stroke="#e6e6e6" strokeWidth="2.500" /></Ico></button>
      </div>
      <ViewCube />
      <button className="absolute top-[189px] right-[59px] flex h-4 w-11 items-center justify-between rounded border border-[#aaaeb8] bg-[#8f939f] px-1 font-['Liberation_Sans',sans-serif] text-[9px] text-[#50545e]">
        WCS
        <Ico w={8} h={5}><path d="M1 .5h6L4 4.500z" stroke="#b3b7c2" /></Ico>
      </button>
      <NavBar />
    </div>
  );
}

function CommandLine() {
  return (
    <div className="flex border-t-[3px] border-r border-b border-[#666] bg-[#666] pl-px">
      <div className="flex w-[21px] flex-col items-center bg-linear-to-b from-[#7a7a7a] to-[#3a3a3a] pt-1">
        <Ico w={17} h={5}><path d="M0 1h17M0 4h17" stroke="#b5b5b5" strokeWidth="2" strokeDasharray="2 1" /></Ico>
        <button aria-label="閉じる" className="mt-2"><Ico w={10} h={9}><path d="M1 1l8 7M9 1L1 8" stroke="#fff" strokeWidth="2" /></Ico></button>
        <button aria-label="カスタマイズ" className="mt-2.5"><Ico w={15} h={15}><path d="M1 2.500l3 2.500L6 3 3.500.5C7-.5 9 2 8 5.500l6 6.500c1 1.500-.8 3-2 2L6 8C3 8.500.5 6.500 1 2.500z" fill="#fff" /></Ico></button>
      </div>
      <div className="flex-1 bg-white">
        <p className="flex h-7 items-end bg-[#c8c8c8] pl-0.5 font-['Liberation_Mono','Noto_Sans_CJK_JP',monospace] text-[11px] leading-4 text-black">コマンド: CAPAIMPORT</p>
        <div className="flex h-6 items-center border-t border-[#777] pl-1.5">
          <Ico w={15} h={14}><rect x=".5" y=".5" width="14" height="13" fill="#e2e5ea" stroke="#8b93a0" /><path d="M3 4l3.500 3L3 10M7.500 10.500H12" stroke="#2b2f38" strokeWidth="1.300" /></Ico>
          <span className="ml-[3px] flex"><Caret color="#777" /></span>
          <input aria-label="コマンド入力" placeholder="ここにコマンドを入力" className="ml-1.5 flex-1 text-[11px] text-black outline-none placeholder:text-[#8c8c8c]" />
        </div>
      </div>
    </div>
  );
}

/* ---------- status bar ---------- */

function Group({ className, children }: { className: string; children: ReactNode }) {
  return <div className={`mr-px flex h-[26px] items-center border border-[#6e6e6e] bg-[#4a4a4a] ${className}`}>{children}</div>;
}

function Tool({ name, children }: { name: string; children: ReactNode }) {
  return <button aria-label={name} className="flex">{children}</button>;
}

function StatusBar() {
  const L = "#c6c6c6";
  const A = "#3d9bff";
  const tri = <Caret w={7} color="#fff" />;
  return (
    <footer className="flex h-8 items-start justify-between border-b-2 border-[#b9cbdb] bg-[#383838] text-[12px]">
      <div className="flex pt-0.5 pl-2.5">
        <button className="h-[18px] w-[62px] bg-linear-to-b from-[#696969] to-[#909090] leading-4 font-bold text-white [clip-path:polygon(0_0,100%_0,calc(100%_-_8px)_100%,10px_100%)]">モデル</button>
        <button className="h-[18px] w-[68px] bg-linear-to-b from-[#484848] to-[#606060] leading-4 text-[#b8b8b8] [clip-path:polygon(0_0,100%_0,calc(100%_-_8px)_100%,8px_100%)]">Layout1</button>
        <button aria-label="新しいレイアウト" className="ml-1 flex h-4 w-[22px] items-center justify-center rounded-tl-lg rounded-br-lg bg-[#505050]"><Ico w={9} h={9}><path d="M4.500 0v9M0 4.500h9" stroke="#aaa" strokeWidth="2" /></Ico></button>
      </div>
      <div className="flex pt-0.5 text-white">
        <Group className="w-[34px] justify-center"><button className="text-[10px] font-bold whitespace-nowrap">モデル</button></Group>
        <Group className="w-[65px] justify-between px-1">
          <Tool name="グリッド"><Ico w={15}><path d="M2.500 0v16M6 0v16M9.500 0v16M13 0v16M0 3h15M0 6.500h15M0 10h15M0 13.500h15" stroke={L} strokeDasharray="2 1" /></Ico></Tool>
          <Tool name="スナップ"><Ico w={15}><path d="M0 1.500h15M0 4.500h15M0 7.500h15M0 10.500h15M0 13.500h15" stroke={L} strokeDasharray="1 2" /></Ico></Tool>
          {tri}
        </Group>
        <Group className="-mr-px! w-[104px] justify-between pr-1 pl-1.5">
          <Tool name="直交モード"><Ico><path d="M1.500 1v13H14M1.500 9h4.500v5" stroke={L} /></Ico></Tool>
          <Tool name="極トラッキング"><Ico w={17}><circle cx="7.500" cy="8" r="6.500" stroke={A} strokeWidth="1.500" /><path d="M7 9l7-7M7 9h9" stroke={A} strokeWidth="1.500" /></Ico></Tool>
          {tri}
          <Tool name="アイソメ"><Ico w={17} h={18}><path d="M8.500 0v18M1 1l14 16" stroke={L} /><path d="M3 12l5-5" stroke="#888" /></Ico></Tool>
          {tri}
        </Group>
        <Group className="w-[66px] justify-between px-1">
          <Tool name="スナップトラッキング"><Ico w={17}><path d="M14 1L2 14h14" stroke={A} strokeWidth="1.800" /><path d="M6 7l5 4" stroke={A} /></Ico></Tool>
          <Tool name="オブジェクトスナップ"><Ico w={17}><path d="M3 3h12v11H3z" stroke={A} strokeWidth="1.500" /><path d="M1 1h4v4H1z" fill="#0c0" stroke="#063" /></Ico></Tool>
          {tri}
        </Group>
        <Group className="w-[111px] justify-between px-1">
          <Tool name="注釈オブジェクト"><Ico w={17}><path d="M8 0l2 8 5 7-5-3-2-2-3 3-5 3 6-8z" fill={A} /><circle cx="13" cy="3" r="2.500" stroke={A} /></Ico></Tool>
          <Tool name="自動尺度"><Ico w={17}><path d="M8 1l2 7 5 7-5-3-2-2-3 3-5 3 6-8z" fill={L} /><path d="M15 0l-3 4h3l-2 4" stroke={L} /></Ico></Tool>
          <Tool name="注釈"><Ico><path d="M8 0l2 8 5 7-5-3-2-2-3 3-4 2 5-7z" fill={L} /></Ico></Tool>
          <button className="flex items-center gap-1 text-[12px]">1:1 {tri}</button>
        </Group>
        <Group className="-mr-px! w-[41px] justify-between px-1">
          <Tool name="ワークスペース"><Ico><circle cx="8" cy="8" r="4" stroke={L} strokeWidth="3" /><path d="M8 1.500v2M8 12.500v2M1.500 8h2M12.500 8h2M3.500 3.500L5 5M11 11l1.500 1.500M12.500 3.500L11 5M5 11l-1.500 1.500" stroke={L} strokeWidth="2" /></Ico></Tool>
          {tri}
        </Group>
        <Group className="w-[26px] justify-center"><Tool name="注釈モニター"><Ico><path d="M8 1v14M1 8h14" stroke={L} strokeWidth="1.500" /></Ico></Tool></Group>
        <Group className="w-[26px] justify-center"><Tool name="選択"><Ico><path d="M.5.500h6v6h-6z" stroke={L} /><circle cx="12" cy="7" r="3.500" stroke={L} /><path d="M6 9l3.500 6h-7z" stroke={L} /></Ico></Tool></Group>
        <Group className="w-[26px] justify-center"><Tool name="パフォーマンス"><Ico w={17} h={17}><circle cx="8.500" cy="8.500" r="7.500" stroke={L} /><path d="M5 6l5 4" stroke={L} strokeWidth="1.500" /></Ico></Tool></Group>
        <Group className="w-[51px] justify-between px-[3px]">
          <Tool name="ハードウェア"><Ico w={17}><path d="M1 1h6l5 4v8H3z" fill="#3f5f80" stroke="#dbe6ef" /><path d="M2 10h9v5H4z" fill="#e6c93d" /><path d="M7 12l3 3 6-8" stroke="#5cc13a" strokeWidth="2" /></Ico></Tool>
          <Tool name="グラフィックス"><Ico w={19} h={18}><path d="M.5.500h17v15H.5z" fill="#f2f2f2" stroke="#222" /><path d="M2 14C5-2 9-1 16 14" stroke="#333" strokeWidth="1.300" /><path d="M14.500 8l4 9h-8z" fill="#e36a23" stroke="#8d3a0d" strokeWidth=".5" /><path d="M14.500 11v4" stroke="#fff" /></Ico></Tool>
        </Group>
        <Group className="w-[50px] justify-between px-1">
          <Tool name="全画面表示"><Ico><path d="M.5 1.500h15v13H.5z" stroke={L} /><path d="M9 4h4v4zM3 8v4h4z" fill={L} /><path d="M12 5L9.500 7.500M4 11l2.500-2.500" stroke={L} /></Ico></Tool>
          <Tool name="カスタマイズ"><Ico><path d="M0 2.500h15M0 8h15M0 13.500h15" stroke={L} strokeWidth="2" /></Ico></Tool>
        </Group>
      </div>
    </footer>
  );
}

export default function App() {
  return (
    <div className="flex min-h-screen flex-col bg-[#383838] font-['Noto_Sans','Noto_Sans_CJK_JP',sans-serif]">
      <header className="relative border-t border-[#9db6cd]">
        <TitleBar />
        <RibbonTabs />
        <Ribbon />
        <button aria-label="アプリケーションメニュー" className="absolute top-0 left-0 flex h-[41px] w-[41px] items-start gap-0.5 border-2 border-[#1c1c1c] bg-linear-to-b from-[#6b6b6b] to-[#c9c9c9] pt-0.5 pl-0.5 shadow-[inset_0_0_0_1px_#a8a8a8]">
          <Ico w={25} h={28}>
            <path d="M9 1h8l8 25h-6l-2-6H8l-3 6H0z" fill="#b5171d" />
            <path d="M9 1L0 26h5L13 7z" fill="#e0434a" />
            <path d="M13 7l-4 10h8z" fill="#8d8d8d" />
            <path d="M9 1l4 6 6 19h6L17 1z" fill="#c9222a" />
            <path d="M9 17l8-1 2 4H8l-6 5z" fill="#8e1015" />
          </Ico>
          <span className="mt-3.5 flex"><Caret w={7} color="#2a2a2a" /></span>
        </button>
      </header>
      <div className="border-t border-[#7a7a7a]"><FileTabs /></div>
      <main className="grid flex-1 grid-cols-[339px_1fr]">
        <PropertiesPalette />
        <div className="flex min-w-0 flex-col">
          <Canvas />
          <CommandLine />
        </div>
      </main>
      <StatusBar />
    </div>
  );
}
